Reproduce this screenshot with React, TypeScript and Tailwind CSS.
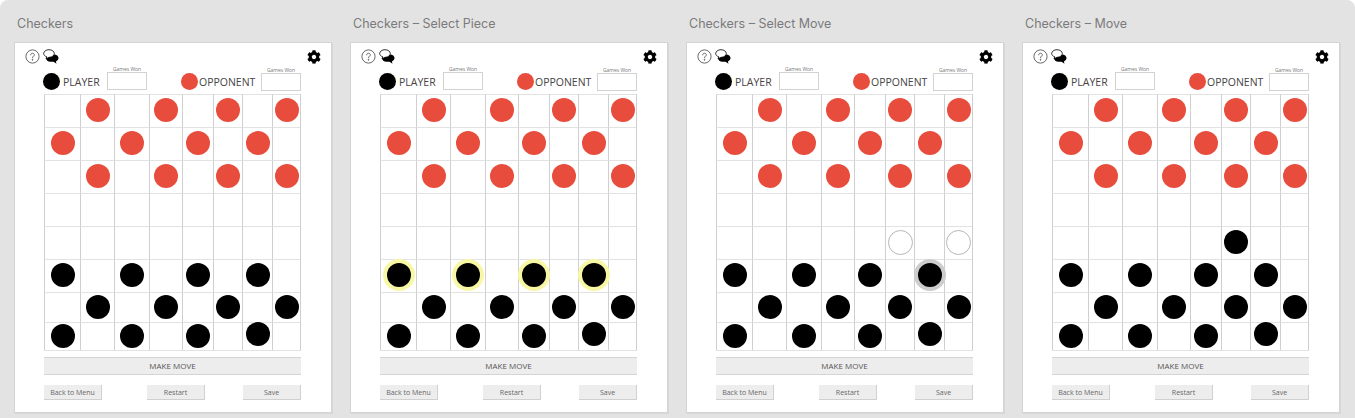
import React from 'react';
import { FaCog } from 'react-icons/fa';

const BOARD = [
  '-r-r-r-r',
  'r-r-r-r-',
  '-r-r-r-r',
  '--------',
  '--------',
  'b-b-b-b-',
  '-b-b-b-b',
  'b-b-b-b-',
];

const SELECT_PIECE = BOARD.map((row, i) => (i === 5 ? 'y-y-y-y-' : row));
const SELECT_MOVE = BOARD.map((row, i) => {
  if (i === 4) return '-----o-o';
  if (i === 5) return 'b-b-b-g-';
  return row;
});
const MOVED = BOARD.map((row, i) => (i === 4 ? '-----b--' : row));

const PANELS = [
  { title: 'Checkers', board: BOARD },
  { title: 'Checkers – Select Piece', board: SELECT_PIECE },
  { title: 'Checkers – Select Move', board: SELECT_MOVE },
  { title: 'Checkers – Move', board: MOVED },
];

const Piece = ({ kind, lifted }: { kind: string; lifted: boolean }) => {
  const offset = lifted ? '-translate-y-0.5' : '';
  if (kind === 'r') return <div className="z-10 mb-0.5 size-6 shrink-0 rounded-full bg-[#e74c3c]" />;
  if (kind === 'b') return <div className={`z-10 mb-0.5 size-6 shrink-0 rounded-full bg-black ${offset}`} />;
  if (kind === 'y')
    return <div className="z-10 mb-0.5 size-6 shrink-0 rounded-full bg-black shadow-[0_0_0_4px_#f8f7a4]" />;
  if (kind === 'g')
    return <div className="z-10 mb-0.5 size-6 shrink-0 rounded-full bg-black shadow-[0_0_0_4px_#cdcdcd]" />;
  if (kind === 'o')
    return <div className="z-10 mb-0.5 size-[25px] shrink-0 rounded-full border-[1.5px] border-[#b4b8b8] bg-white" />;
  return null;
};

const Board = ({ rows }: { rows: string[] }) => (
  <div className="grid h-[257px] w-[257px] grid-cols-[36px_34px_35px_33px_31px_29px_30px_28px] grid-rows-[33px_33px_33px_33px_33px_33px_30px_28px] border-r border-b border-r-[#cfcfcf] border-b-[#e2e2e2]">
    {rows.map((row, r) =>
      row.split('').map((kind, c) => (
        <div
          key={`${r}-${c}`}
          className="flex items-center justify-center border-t border-l border-t-[#e2e2e2] border-l-[#cfcfcf]"
        >
          <Piece kind={kind} lifted={r === 7 && c === 6} />
        </div>
      )),
    )}
  </div>
);

const ScoreBox = () => (
  <div className="flex w-10 flex-col items-center">
    <span className="text-[5px] leading-[6px] text-[#777]">Games Won</span>
    <div className="h-[18px] w-10 border border-[#d2d2d2]" />
  </div>
);

const GrayButton = ({ label, className }: { label: string; className?: string }) => (
  <button
    className={`h-[15px] w-[58px] border-r border-b border-[#d0d0d0] bg-[#eeedee] text-[7px] leading-none text-[#666] ${className ?? ''}`}
  >
    {label}
  </button>
);

const HelpIcon = () => (
  <svg width="15" height="15" viewBox="0 0 15 15" fill="none" stroke="#444" strokeWidth="0.8">
    <circle cx="7.5" cy="7.5" r="6.6" />
    <path d="M5.7 5.9c0-1 .8-1.7 1.8-1.7s1.8.7 1.8 1.6c0 1.4-1.8 1.4-1.8 3" strokeLinecap="round" />
    <circle cx="7.5" cy="10.8" r="0.4" fill="#444" />
  </svg>
);

const ChatIcon = () => (
  <svg width="16" height="15" viewBox="0 0 16 15">
    <path d="M6 5.500h5c2.600 0 4.500 1.500 4.500 3.600 0 1.600-1 2.800-2.600 3.300l.6 2.300-2.900-2H7.500C5 12.700 3 11.200 3 9c0-2 1.200-3.500 3-3.500z" fill="#000" />
    <path d="M6 .7c3 0 5.300 1.700 5.300 3.800S9 8.300 6 8.300l-2.900 1.500.6-2C1.800 7.200.7 6 .7 4.500.7 2.400 3 .7 6 .7z" fill="#fff" stroke="#000" strokeWidth="0.8" />
  </svg>
);

const Panel = ({ title, board }: { title: string; board: string[] }) => (
  <section className="w-[318px] shrink-0">
    <h2 className="pl-[3px] font-['Inter',sans-serif] text-[12.5px] leading-4 text-[#7b7b7b]">{title}</h2>
    <div className="mt-[10px] h-[371px] border border-[#d3d3d3] bg-white pr-[30px] pl-[29px] shadow-[1px_1px_0_#d8d8d8]">
      <div className="-mr-[20px] -ml-[19px] flex h-[27px] items-center justify-between">
        <div className="flex items-center gap-[3px]">
          <HelpIcon />
          <ChatIcon />
        </div>
        <FaCog className="size-[14px] text-black" />
      </div>
      <div className="flex h-[21px] items-end justify-between">
        <div className="-ml-px flex items-end pb-px">
          <div className="size-[17px] rounded-full bg-black" />
          <span className="mr-[7px] -mb-px ml-[3px] w-[37px] text-[10.5px] leading-[17px] text-[#444]">PLAYER</span>
          <ScoreBox />
        </div>
        <div className="flex items-end">
          <div className="mb-px size-[17px] rounded-full bg-[#e74c3c]" />
          <span className="mr-[6px] ml-px w-[56px] text-[10.5px] leading-[17px] text-[#444]">OPPONENT</span>
          <ScoreBox />
        </div>
      </div>
      <div className="mt-[3px]">
        <Board rows={board} />
      </div>
      <button className="mt-[6px] h-[18px] w-[257px] border-t border-b border-[#d4d4d4] bg-[#eeedee] text-[8px] leading-none text-[#555]">
        MAKE MOVE
      </button>
      <div className="mt-[10px] flex">
        <GrayButton label="Back to Menu" />
        <GrayButton label="Restart" className="ml-[45px]" />
        <GrayButton label="Save" className="ml-[38px]" />
      </div>
    </div>
  </section>
);

export default function App() {
  return (
    <main className="flex h-[418px] w-[1355px] gap-[18px] overflow-hidden rounded-t-lg bg-[#e3e3e3] pt-4 pl-[14px] font-['Open_Sans',sans-serif]">
      {PANELS.map((panel) => (
        <Panel key={panel.title} title={panel.title} board={panel.board} />
      ))}
    </main>
  );
}
